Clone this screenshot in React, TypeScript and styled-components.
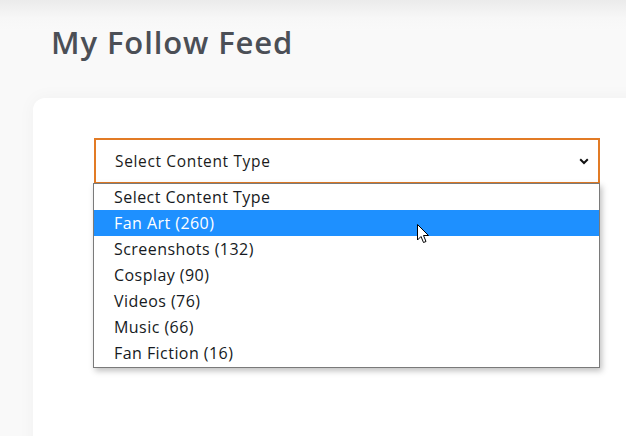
import React from "react";
import styled, { createGlobalStyle } from "styled-components";

const GlobalStyle = createGlobalStyle`
  html, body { margin: 0; padding: 0; }
  body {
    background: #f9f9f9;
    font-family: "Open Sans", "Liberation Sans", sans-serif;
    overflow: hidden;
  }
`;

const Page = styled.div`
  position: relative;
  width: 626px;
  height: 436px;
  overflow: hidden;
  background: linear-gradient(to bottom, #ebebeb 0px, #f7f7f7 18px, #f9f9f9 30px);
`;

const Title = styled.h1`
  margin: 0;
  padding: 22px 0 0 51px;
  height: 76px;
  box-sizing: border-box;
  font-family: "Open Sans", sans-serif;
  font-weight: 600;
  font-size: 31px;
  line-height: 40px;
  color: #4b4f56;
  letter-spacing: 0.9px;
`;

const Card = styled.div`
  margin: 22px 0 0 33px;
  width: 640px;
  height: 400px;
  background: #ffffff;
  border-radius: 12px;
  box-shadow: 0 0 18px rgba(0, 0, 0, 0.04);
  padding: 40px 0 0 61px;
  box-sizing: border-box;
`;

const SelectWrap = styled.div`
  position: relative;
  width: 506px;
`;

const SelectBox = styled.div`
  display: flex;
  align-items: center;
  justify-content: space-between;
  height: 46px;
  box-sizing: border-box;
  border: 2px solid #e27b25;
  padding: 0 9px 0 19px;
  font-size: 15.5px;
  letter-spacing: 0.65px;
  color: #1b1b1b;
  background: #fff;
`;

const List = styled.ul`
  position: absolute;
  left: -1px;
  top: 45px;
  width: 507px;
  margin: 0;
  padding: 0;
  list-style: none;
  background: #fff;
  border: 1px solid #7a7a7a;
  box-sizing: border-box;
  box-shadow: 2px 3px 6px rgba(0, 0, 0, 0.25);
  padding-bottom: 1px;
`;

const Item = styled.li<{ $active?: boolean }>`
  height: 26px;
  line-height: 26px;
  padding-left: 20px;
  font-size: 16px;
  letter-spacing: 0.45px;
  color: ${(p) => (p.$active ? "#ffffff" : "#161a22")};
  background: ${(p) => (p.$active ? "#1e90ff" : "transparent")};
`;

const Cursor = styled.svg`
  position: absolute;
  left: 417px;
  top: 224px;
`;

const options = [
  "Select Content Type",
  "Fan Art (260)",
  "Screenshots (132)",
  "Cosplay (90)",
  "Videos (76)",
  "Music (66)",
  "Fan Fiction (16)",
];

export default function App() {
  return (
    <Page>
      <GlobalStyle />
      <Title>My Follow Feed</Title>
      <Card>
        <SelectWrap>
          <SelectBox>
            <span>Select Content Type</span>
            <svg width="10" height="7" viewBox="0 0 10 7">
              <path d="M1.2 1.3 L5 5 L8.8 1.3" fill="none" stroke="#111" strokeWidth="2" />
            </svg>
          </SelectBox>
          <List>
            {options.map((o, i) => (
              <Item key={o} $active={i === 1}>
                {o}
              </Item>
            ))}
          </List>
        </SelectWrap>
      </Card>
      <Cursor width="13" height="20" viewBox="0 0 13 20">
        <path
          d="M0.5 0.5 L0.5 16 L4 12.5 L6.5 18.5 L9 17.5 L6.5 11.5 L11.5 11.5 Z"
          fill="#fff"
          stroke="#000"
          strokeWidth="1"
          strokeLinejoin="miter"
        />
      </Cursor>
    </Page>
  );
}
